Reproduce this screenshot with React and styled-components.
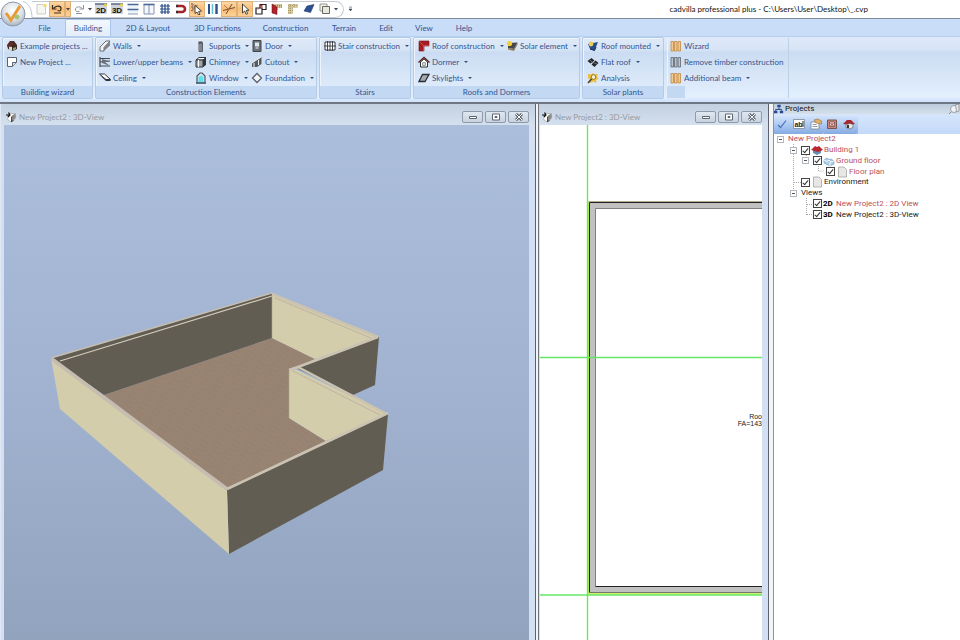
import React from "react";
import styled, { createGlobalStyle, css } from "styled-components";

const Global = createGlobalStyle`
  *, *::before, *::after { box-sizing: border-box; }
  html, body { margin: 0; padding: 0; }
  body { font-family: Lato, "Open Sans", sans-serif; font-size: 8px; line-height: 12px; background: #fff; }
  button { font: inherit; color: inherit; border: 0; padding: 0; margin: 0; background: none; cursor: default; }
`;

const Page = styled.div`
  display: flex;
  flex-direction: column;
  height: 100vh;
  overflow: hidden;
`;

/* ---------- title bar ---------- */

const TitleBar = styled.header`
  position: relative;
  display: flex;
  align-items: center;
  height: 19px;
  padding-left: 32px;
  background: #fff;
  border-bottom: 1px solid #7f8a9c;
`;

const AppOrb = styled.button`
  position: absolute;
  left: 0;
  top: 1px;
  z-index: 2;
  width: 26px;
  height: 26px;
  svg { display: block; }
`;

const SwooshEdge = styled.svg`
  position: absolute;
  left: 22px;
  top: 1px;
`;

const QuickAccess = styled.div`
  display: flex;
  align-items: center;
  height: 17px;
  padding: 0 4px 0 1px;
  border: 1px solid #c3cad6;
  border-left: 0;
  border-radius: 0 9px 9px 0;
`;

const Tool = styled.button`
  display: flex;
  align-items: center;
  justify-content: center;
  width: ${(p) => (p.$narrow ? 6 : 16)}px;
  height: 16px;
  ${(p) =>
    p.$active &&
    css`
      background: linear-gradient(#fbdcae, #fabc74 50%, #fdd59b);
      box-shadow: inset 0 0 0 1px #dcb27a;
    `}
`;

const OverflowButton = styled.button`
  display: flex;
  width: 9px;
  height: 12px;
  margin-left: 2px;
  align-items: center;
  justify-content: center;
`;

const Title = styled.h1`
  margin: 0 92px 0 auto;
  font-size: 8px;
  line-height: 12px;
  font-weight: 400;
  color: #111;
  white-space: nowrap;
`;

/* ---------- ribbon ---------- */

const TabStrip = styled.nav`
  display: flex;
  height: 17px;
  padding-left: 24px;
  background: #c9dcf8;
`;

const Tab = styled.button`
  width: ${(p) => p.$w}px;
  height: 17px;
  color: #35558f;
  white-space: nowrap;
  ${(p) =>
    p.$active &&
    css`
      background: linear-gradient(#f4f8fe, #e3edf9);
      border: 1px solid #a9c5ea;
      border-bottom: 0;
      border-radius: 2px 2px 0 0;
    `}
`;

const Ribbon = styled.section`
  display: flex;
  gap: 2px;
  height: 66px;
  padding: 0 2px 3px;
  background: linear-gradient(#dfe9f8, #d8e5f6 18%, #cbdcf2 24%, #e3effd 92%, #cfe2fa);
  border-top: 1px solid #b4cff0;
`;

const Group = styled.section`
  display: flex;
  flex-direction: column;
  width: ${(p) => p.$w}px;
  border: 1px solid #b3cbe6;
  border-radius: 2px;
  box-shadow: inset 1px 1px 0 #edf4fc;
  ${(p) =>
    p.$open &&
    css`
      border-color: transparent;
      box-shadow: inset 1px 0 0 #edf4fc, inset -1px 0 0 #bcd0e8;
    `}
`;

const Columns = styled.div`
  display: flex;
  flex: 1;
  padding: 0 0 0 ${(p) => p.$pad}px;
`;

const Column = styled.div`
  display: flex;
  flex-direction: column;
  width: ${(p) => (p.$w ? p.$w + "px" : "auto")};
`;

const Command = styled.button`
  display: flex;
  align-items: center;
  gap: 2px;
  height: 16px;
  color: #34548f;
  white-space: nowrap;
  svg { flex: none; }
`;

const Caret = styled.i`
  margin-left: 3px;
  border: 2px solid transparent;
  border-top: 2px solid #35507f;
  border-bottom: 0;
`;

const GroupLabel = styled.h2`
  margin: 0;
  width: ${(p) => (p.$short ? "18px" : "auto")};
  height: 12px;
  font-size: 8px;
  line-height: 12px;
  font-weight: 400;
  text-align: center;
  color: #35558f;
  background: #c3d9f3;
`;

/* ---------- workspace ---------- */

const Workspace = styled.main`
  display: grid;
  grid-template-columns: minmax(0, 536fr) minmax(0, 231fr) 189px;
  grid-template-rows: minmax(0, 1fr);
  flex: 1;
  min-height: 0;
  gap: 2px;
  border-top: 2px solid #707784;
  background: #f3f4f6;
`;

const ViewWindow = styled.section`
  display: flex;
  flex-direction: column;
  min-width: 0;
  padding: 0 6px 0 ${(p) => p.$left}px;
  background: linear-gradient(#c3d0e0, #d5e1ef 22px, #d3e0f3 60px);
  border-right: 1px solid #5d626d;
  border-left: 1px solid ${(p) => p.$edge};
`;

const WindowBar = styled.header`
  display: flex;
  align-items: center;
  height: 21px;
  padding: 4px 0 0 1px;
  gap: 2px;
  color: #969ba3;
`;

const WindowTitle = styled.h2`
  margin: 0;
  flex: 1;
  font-size: 8px;
  line-height: 12px;
  font-weight: 400;
  white-space: nowrap;
`;

const WindowButton = styled.button`
  display: flex;
  align-items: center;
  justify-content: center;
  width: 21px;
  height: 12px;
  border: 1px solid #8f9baa;
  border-radius: 2px;
  background: linear-gradient(#dfe7f0, #c8d3e0);
`;

const Canvas = styled.svg`
  display: block;
  flex: 1;
  width: 100%;
  min-height: 0;
  background: ${(p) => (p.$sheet ? "#fff" : "#a3b4cf")};
`;

const Panel = styled.aside`
  display: flex;
  flex-direction: column;
  margin-left: 2px;
  background: #fff;
  border-left: 1px solid #8d939e;
  font-family: Roboto, "Liberation Sans", Arial, sans-serif;
`;

const PanelHeader = styled.header`
  display: flex;
  align-items: center;
  gap: 1px;
  height: 10px;
  background: linear-gradient(#bccbdc, #d4dfea);
`;

const PanelTitle = styled.h2`
  margin: 0;
  flex: 1;
  font-size: 8px;
  line-height: 10px;
  font-weight: 400;
  color: #111;
`;

const PanelTools = styled.div`
  display: flex;
  height: 20px;
  background: linear-gradient(#d5e5fc, #c4dafa);
`;

const PanelToolSet = styled.div`
  display: flex;
  align-items: center;
  gap: 1px;
  width: ${(p) => p.$w}px;
  background: linear-gradient(#dbe8fc, #b4cff6 45%, #85aae0);
  border-radius: 0 2px 2px 0;
`;

const Tree = styled.ul`
  position: relative;
  display: flex;
  flex-direction: column;
  height: 86px;
  margin: 0;
  padding: 0;
  list-style: none;
`;

const Guides = styled.svg`
  position: absolute;
  left: 0;
  top: 0;
`;

const Node = styled.li`
  position: relative;
  display: flex;
  flex: 1 1 0;
  min-height: 0;
  align-items: center;
  padding-left: ${(p) => [3, 16, 28, 41, 28][p.$level]}px;
  color: ${(p) => (p.$red ? "#b9505c" : "#222")};
  font-size: 8px;
  line-height: 10px;
  white-space: nowrap;
`;

const Expander = styled.button`
  width: 7px;
  height: 7px;
  margin-right: 4px;
  display: flex;
  align-items: center;
  justify-content: center;
  background: #fff;
  border: 1px solid #b4b9c0;
  &::before { content: ""; width: 3px; height: 1px; background: #555; }
`;

const Spacer = styled.span`
  width: 11px;
`;

const CheckLabel = styled.label`
  display: flex;
  align-items: center;
  gap: 1px;
`;

const Check = styled.input`
  appearance: none;
  display: flex;
  justify-content: center;
  width: 9px;
  height: 9px;
  margin: 0;
  background: #fff;
  border: 1px solid #444;
  &:checked::before {
    content: "";
    width: 3px;
    height: 6px;
    border: solid #333;
    border-width: 0 1px 1px 0;
    transform: rotate(40deg);
  }
`;

const Dim = styled.b`
  width: 12px;
  color: #000;
`;

/* ---------- icons ---------- */

const art = {
  page: <><path d="M2 1.500h6l2.500 2.500v7H2z" fill="#f6f6f2" stroke="#b9b9b4" strokeWidth=".7" /><circle cx="10" cy="2.500" r="1.700" fill="#f3dc66" /></>,
  undo: <><path d="M1.500 2v4H5.500" fill="none" stroke="#3b3024" strokeWidth="1.200" /><path d="M2.500 5.500C5 2 10 2.500 10 5.500S8 8 6.500 7.500" fill="none" stroke="#3b3024" strokeWidth="1.300" /><path d="M3 10h7" stroke="#3b3024" /></>,
  redo: <><path d="M10.500 2v4H6.500" fill="none" stroke="#8d9096" /><path d="M9.500 5.500C7 3 3 3.500 2.500 6s2 3 4 2.500M3 10.500h6" fill="none" stroke="#8d9096" /></>,
  h2: <><path d="M0 1h12v10H0z" fill="#cfd3da" /><path d="M0 1h12" stroke="#5d6b86" strokeWidth="1.500" /><text x="6" y="9.500" fontSize="8" fontWeight="700" textAnchor="middle" fontFamily="Liberation Sans, sans-serif" fill="#111">2D</text><circle cx="10.500" cy="2" r="1.500" fill="#f0cf45" /></>,
  h3: <><path d="M0 1h12v10H0z" fill="#cfd3da" /><path d="M0 1h12" stroke="#5d6b86" strokeWidth="1.500" /><text x="6" y="9.500" fontSize="8" fontWeight="700" textAnchor="middle" fontFamily="Liberation Sans, sans-serif" fill="#111">3D</text><circle cx="10.500" cy="2" r="1.500" fill="#f0cf45" /></>,
  splitH: <><path d="M1 1h10v10H1z" fill="#eef3fa" /><path d="M.5 1.500h11M.5 6.500h11" stroke="#4a6797" strokeWidth="1.500" /><path d="M1 11h10" stroke="#8f9db5" /></>,
  splitV: <><path d="M1 1.500h10v9.500H1zM6 2v9" fill="#f4f7fb" stroke="#8494ae" /><path d="M.5 1.500h11" stroke="#4a6797" strokeWidth="1.600" /></>,
  grid: <path d="M3 1v10M6 1v10M9 1v10M1 3h10M1 6h10M1 9h10" stroke="#264c86" strokeWidth="1.200" />,
  magnet: <><path d="M2 3h5a3 3 0 0 1 0 6H2" fill="none" stroke="#a5222a" strokeWidth="2.600" /><path d="M1 3h2M1 9h2" stroke="#333" strokeWidth="2.600" /></>,
  pick: <><path d="M0 1l7 2M1 0l1 9M0 8l7-6M0 4h5" stroke="#6a5446" strokeWidth=".8" strokeDasharray="1.500 .7" /><path d="M4 2.500v8l2-1.500 1.500 3 1.500-.7-1.400-2.800 2.900-.5z" fill="#fff" stroke="#333" strokeWidth=".9" /></>,
  bars: <><path d="M2 1v10" stroke="#2d4f85" strokeWidth="2" /><path d="M5.500 1v10" stroke="#5fc3dc" strokeWidth="1.600" /><path d="M9.500 1v10" stroke="#2d4f85" strokeWidth="2.400" /></>,
  snap: <><path d="M0 7.500l12-3M3 11L9 1" stroke="#735035" /><path d="M1 2l5 5" stroke="#ab6739" strokeWidth=".8" /></>,
  arrow: <path d="M3.500 1v9l2.200-2 1.500 3.300 1.500-.7-1.500-3.200H10z" fill="#fff" stroke="#333" strokeWidth=".9" />,
  copy: <><path d="M5 1.500h6v5H5z" fill="#fff" stroke="#222" strokeWidth="1.200" /><path d="M1 5h6v6H1z" fill="#fff" stroke="#222" strokeWidth="1.200" /><path d="M3 6.500l4-4M5 2.500h2v2" stroke="#b23332" fill="none" /></>,
  redWall: <><path d="M1 1h10v4H7v2H4z" fill="#d3c59a" /><path d="M1 1l5 3v7.500L1 10z" fill="#b32028" stroke="#5f1519" strokeWidth=".5" /><path d="M4 2.500h7M6 4h5" stroke="#7e6e46" strokeWidth=".8" strokeDasharray="1 1" /></>,
  tanWall: <><path d="M1 1h10v4H6v6H1z" fill="#d9cda0" /><path d="M1 2.500h10M1 5h6M1 7.500h5M1 10h4M3 1v10M7 1v4" stroke="#8f8050" strokeWidth=".7" strokeDasharray="1 1" /></>,
  slab: <path d="M4 3L11 1.500 7.500 9.500 1 8z" fill="#2c4f92" stroke="#23396a" strokeWidth=".6" />,
  sheets: <><path d="M1 1h7v7H1z" fill="#f3f2ea" stroke="#96958c" /><path d="M3.500 3.500h7v7h-7z" fill="#e9e8da" stroke="#696b66" /></>,
  overflow: <path d="M4 3.500h4M4 6h4l-2 2.500z" fill="#345" stroke="#345" strokeWidth=".8" />,
  house: <><path d="M1 5l3-4h4l3 4v4l-4 2-5-2z" fill="#3c2d29" /><path d="M3 6l3 1v3.500L3 9.500z" fill="#e5dcce" /><path d="M1 6l4-4.500 3 1L5 7z" fill="#6d2b26" /><path d="M7 8l3-1v2l-3 2z" fill="#8aa37b" /></>,
  newProj: <><path d="M1.500 1.500h9v5h-4v4h-5z" fill="#fff" stroke="#5c636e" /><path d="M10.500 6.500l-4 4" stroke="#8a8f96" /></>,
  wall: <><path d="M1 7l6-6h4L5 7.500V11H1z" fill="#f3f3f1" stroke="#5b6068" strokeWidth=".9" /><path d="M5 7.500L11 1.500v4L5 11z" fill="#7d828a" /></>,
  beams: <><path d="M1 1v10M1 2.500h10M1 6l10-1M1 10h10" stroke="#444a55" strokeWidth="1.200" /><path d="M3 3l7 2-4 1 5 4-8-3z" fill="#6b717b" /></>,
  ceiling: <><path d="M.5 2h5l6 5.500H7z" fill="#fff" stroke="#30343b" /><path d="M.5 3L7 9h4.500V7.500H7z" fill="#30343b" /></>,
  support: <><path d="M4 3h3.500v8.500H4z" fill="#b6babf" stroke="#3d4148" strokeWidth=".8" /><path d="M3.500 1.500h4v2h-4z" fill="#4b4f56" /><path d="M6 4v7" stroke="#50555c" /></>,
  chimney: <><path d="M1 4l3-2.500h7L8 4z" fill="#fff" stroke="#30343b" /><path d="M1 4h7v7H1z" fill="#a0a4a9" stroke="#30343b" /><path d="M8 4l3-2.500V9L8 11z" fill="#30343b" /><path d="M3.500 4v7" stroke="#fff" /></>,
  window: <><path d="M2 11V4l3-3h2l3 3v7z" fill="#dfe8ee" stroke="#4a5561" strokeWidth="1.200" /><path d="M3.500 10V5L6 3.500 8.500 5v5z" fill="#5fe0ee" /><path d="M1 11h10" stroke="#34536a" strokeWidth="1.200" /></>,
  door: <><path d="M2 .5h8v11H2z" fill="#6a7078" stroke="#40454c" /><path d="M4 2.500h4v4H4z" fill="#dfe7ee" /><path d="M4.500 8h3" stroke="#eee" /></>,
  cutout: <><path d="M1 7l5-3.500v7.500H1zM6 4l4.500-3v7L6 11z" fill="#555b63" /><path d="M1 7l9-6M3 7v4M7.500 4v5" stroke="#eee" strokeWidth="1" /></>,
  foundation: <path d="M6 1.500L10.500 6 6 10.500 1.500 6z" fill="#f3f5f7" stroke="#5b626d" strokeWidth="1.300" />,
  stairs: <><path d="M1 2h10v8H1z" fill="#fff" stroke="#333840" /><path d="M3.500 1v10M6 1v10M8.500 1v10M0 6h12" stroke="#333840" strokeWidth=".9" /></>,
  roof: <><path d="M1 1h10v5H6v5H1z" fill="#a71d22" stroke="#781114" strokeWidth=".6" /><path d="M1 1l4.500 4.500M5.500 11V5.500H11" stroke="#df6a65" strokeWidth=".6" fill="none" /></>,
  dormer: <><path d="M2.500 6v5h7V6L6 3z" fill="#fff" stroke="#333" /><path d="M.5 6.500L6 1.500l5.500 5" fill="none" stroke="#5b2423" strokeWidth="1.500" /><path d="M4.500 6.500h3v3h-3z" fill="#ced4da" stroke="#777" strokeWidth=".6" /></>,
  skylight: <path d="M4.500 2.500h6.500L7 9.500H1z" fill="#a5aab0" stroke="#2b2f36" strokeWidth="1.300" />,
  solar: <><path d="M2 3l9.500-.5L8 9 2 8z" fill="#45464a" /><path d="M2 8l6 1 3.500-6.500v2L8 11 2 9.500z" fill="#8f7d5c" /><circle cx="3.500" cy="3.500" r="2.600" fill="#f4cf3d" /></>,
  mounted: <><path d="M1 4l10-2-3.500 8.500L3 9z" fill="#264d8d" /><path d="M3 9l4.500 1.500L9 7" stroke="#152a55" fill="none" /><circle cx="4" cy="4" r="2.400" fill="#e9cf5c" /></>,
  flat: <><path d="M.5 5l4-3 3 2.500-4 3zM4.500 8.500l4-4 3 2.500-4 4z" fill="#25282d" /><path d="M3 4l3 3M7 7l3 1" stroke="#888" strokeWidth=".7" /></>,
  analysis: <><path d="M1 2l3 .5L6 1l1.500 1.500L11 2l-1 3 1.500 2L9 8l.5 3-3-1.500L3 11l.5-3L1 6z" fill="#edbe3a" /><circle cx="6.500" cy="5" r="2.300" fill="#f5f1d0" stroke="#755f2b" strokeWidth=".8" /><path d="M4.500 7L1 11" stroke="#433d37" strokeWidth="1.500" /></>,
  timber: <><path d="M1 1.500h2.500v9.500H1zM4.500 1.500H7v9.500H4.500zM8 1.500h2.500v9.500H8z" fill="#f2c98e" stroke="#c08a47" strokeWidth=".8" /></>,
  timberGrey: <path d="M1 1.500h2.500v9.500H1zM4.500 1.500H7v9.500H4.500zM8 1.500h2.500v9.500H8z" fill="#bdc3cc" stroke="#5c6470" strokeWidth=".8" />,
  view: <><path d="M2.500 4L5 2.500h5.500v5L6 11 3 9z" fill="#fff" stroke="#999" strokeWidth=".6" /><path d="M7 4.500l3.500-2V7L6.500 11z" fill="#888" /><path d="M6.500 5.500V11l2-2" stroke="#222" strokeWidth=".8" fill="none" /><path d="M1 4h4M3.500 1.500L5 4 3 6" stroke="#111" fill="none" strokeWidth="1.200" /></>,
  network: <><path d="M4 1h4v3H4zM0 8h4v3H0zM7 8h4v3H7z" fill="#244a96" /><path d="M6 4v2.500M2 8V6.500h7V8" stroke="#244a96" fill="none" strokeWidth="1.200" /></>,
  pin: <><path d="M1 11l3-3" stroke="#888e96" /><circle cx="6" cy="6" r="3.500" fill="#f2f3f5" stroke="#9aa0a8" /><path d="M7.500 1.500H11V8L8.500 9z" fill="#e6e9ec" stroke="#9aa0a8" /></>,
  tick: <path d="M2 7l2.500 2.500 5.500-7" fill="none" stroke="#4a72b4" strokeWidth="1.200" />,
  abl: <><path d="M.5 1.500h11v9H.5z" fill="#fff" stroke="#7b8593" strokeWidth=".8" /><text x="5.500" y="8.500" fontSize="7" fontWeight="700" textAnchor="middle" fontFamily="Liberation Sans, sans-serif" fill="#222">ab</text><path d="M10 3v6" stroke="#222" /></>,
  props: <><path d="M1 4h8v7H1z" fill="#fff" stroke="#768395" strokeWidth=".8" /><path d="M4 2l4-1 3.500 2v3l-5.500-1z" fill="#e0b068" stroke="#9a713b" strokeWidth=".6" /><path d="M2.500 6.500h4M2.500 8.500h5" stroke="#768395" strokeWidth=".8" /></>,
  redBox: <><path d="M1.500 2h9v8.500h-9z" fill="#c9857e" stroke="#79544f" /><path d="M3.500 4h5v4.500h-5z" fill="#f1e6e3" stroke="#79544f" strokeWidth=".8" /><path d="M4.500 5l3 3m0-3l-3 3" stroke="#a83831" /></>,
  redHouse: <><path d="M0 6l4-4h4l4 4-5 1z" fill="#a9272d" /><path d="M3 6.500l4-1 3 1v3l-3.500 1.500L3 9.500z" fill="#e8e8ea" stroke="#555" strokeWidth=".6" /><path d="M4 7h2v3H4z" fill="#333" /></>,
  building: <><path d="M2 6h8v3l-4 2-4-2z" fill="#648fb2" /><path d="M0 6l4-4 2 1 2-1 4 4-5 2z" fill="#b92830" /></>,
  floor: <><path d="M1 5l3-2 2 1.500L8 4l3 2v3l-4 2-6-3z" fill="#a7cdea" stroke="#6d9abc" strokeWidth=".6" /><path d="M1 5l3 1.500L6 5l2 2 3-1M7 7v4" stroke="#fff" fill="none" /></>,
  doc: <path d="M2.500 1H8l2.500 2.500V11h-8z" fill="#e7e7e5" stroke="#a4a4a2" strokeWidth=".8" />,
};

function Icon({ name, size = 12 }) {
  return (
    <svg width={size} height={size} viewBox="0 0 12 12" aria-hidden="true">
      {art[name]}
    </svg>
  );
}

/* ---------- data ---------- */

const tools = [
  ["page"],
  ["undo", true],
  ["caret", true],
  ["redo"],
  ["caret"],
  ["h2"], ["h3"], ["splitH"], ["splitV"], ["grid"], ["magnet"],
  ["pick", true],
  ["bars"],
  ["snap", true],
  ["arrow", true],
  ["copy"], ["redWall"], ["tanWall"], ["slab"], ["sheets"],
  ["caret"],
];

const tabs = [
  ["File", 41], ["Building", 46], ["2D & Layout", 74], ["3D Functions", 65], ["Construction", 71],
  ["Terrain", 46], ["Edit", 38], ["View", 38], ["Help", 42],
];

const groups = [
  { label: "Building wizard", w: 91, pad: 3, cols: [{ items: [["house", "Example projects ..."], ["newProj", "New Project ..."]] }] },
  {
    label: "Construction Elements", w: 222, pad: 3,
    cols: [
      { w: 96, items: [["wall", "Walls", 1], ["beams", "Lower/upper beams", 1], ["ceiling", "Ceiling", 1]] },
      { w: 56, items: [["support", "Supports", 1], ["chimney", "Chimney", 1], ["window", "Window", 1]] },
      { items: [["door", "Door", 1], ["cutout", "Cutout", 1], ["foundation", "Foundation", 1]] },
    ],
  },
  { label: "Stairs", w: 92, pad: 4, cols: [{ items: [["stairs", "Stair construction", 1]] }] },
  {
    label: "Roofs and Dormers", w: 167, pad: 4,
    cols: [
      { w: 88, items: [["roof", "Roof construction", 1], ["dormer", "Dormer", 1], ["skylight", "Skylights", 1]] },
      { items: [["solar", "Solar element", 1]] },
    ],
  },
  { label: "Solar plants", w: 82, pad: 4, cols: [{ items: [["mounted", "Roof mounted", 1], ["flat", "Flat roof", 1], ["analysis", "Analysis"]] }] },
  { label: "", w: 124, pad: 3, open: true, cols: [{ items: [["timber", "Wizard"], ["timberGrey", "Remove timber construction"], ["timber", "Additional beam", 1]] }] },
];

const nodes = [
  { level: 0, text: "New Project2", red: true, expand: true },
  { level: 1, text: "Building 1", red: true, expand: true, check: true, icon: "building" },
  { level: 2, text: "Ground floor", red: true, expand: true, check: true, icon: "floor" },
  { level: 3, text: "Floor plan", red: true, check: true, icon: "doc" },
  { level: 1, text: "Environment", check: true, icon: "doc" },
  { level: 1, text: "Views", expand: true },
  { level: 4, text: "New Project2 : 2D View", red: true, check: true, dim: "2D" },
  { level: 4, text: "New Project2 : 3D-View", check: true, dim: "3D" },
];

/* ---------- views ---------- */

function Scene3D() {
  return (
    <Canvas viewBox="4 125 525 515" preserveAspectRatio="xMinYMin slice" role="img" aria-label="3D view of the ground floor">
      <defs>
        <linearGradient id="sky" x1="0" y1="0" x2="0" y2="1">
          <stop offset="0" stopColor="#abbedb" />
          <stop offset=".5" stopColor="#a1b3d0" />
          <stop offset="1" stopColor="#92a3be" />
        </linearGradient>
        <pattern id="planks" width="14" height="5" patternUnits="userSpaceOnUse" patternTransform="rotate(28)">
          <path d="M0 0h14v5H0z" fill="#998473" />
          <path d="M0 1h9M5 3.500h9" stroke="#927d6c" strokeWidth=".6" />
        </pattern>
      </defs>
      <path d="M4 125h525v515H4z" fill="url(#sky)" />
      <path d="M104 395L272 338 315 359 289 371 289 418 326 441 228 490z" fill="url(#planks)" />
      <path d="M51 358L272 293V338L104 395z" fill="#615d53" />
      <path d="M272 294L379 337 315 359 272 338z" fill="#d3cdac" />
      <path d="M296 368L379 337 375 385 353 395z" fill="#615d53" />
      <path d="M289 370H297L388 414 326 441 289 418z" fill="#d3cdac" />
      <path d="M227 490L388 414 383 470 229 554z" fill="#615d53" />
      <path d="M51 358L227 490 229 554 60 409z" fill="#d3cdac" />
      <path d="M51 358L272 293" stroke="#c6beb1" strokeWidth="1.500" />
      <path d="M60 361L272 296" stroke="#d3cbb9" strokeWidth="1.200" />
      <path d="M272 294L378 337M289 370L298 367 387 414" fill="none" stroke="#cbc2b0" strokeWidth="2.500" />
      <path d="M275 298L371 338M293 371L380 415" stroke="#bdb3a4" strokeWidth="1" />
      <path d="M52 359L227 489" stroke="#c6bdb0" strokeWidth="3.500" />
      <path d="M227 489L388 413M290 370L378 337" stroke="#cbc3b1" strokeWidth="2.500" />
      <path d="M272 296V338M289 371V418" stroke="#aaa48a" strokeWidth=".6" />
    </Canvas>
  );
}

function Plan2D() {
  return (
    <Canvas $sheet viewBox="540 125 222 515" preserveAspectRatio="xMinYMin slice" role="img" aria-label="2D floor plan">
      <path d="M589 203h186v6H596v378h179v6H589z" fill="#c1c1c1" />
      <path d="M775 201.500H588.500" stroke="#b4b08b" fill="none" />
      <path d="M588.500 202V594H775" stroke="#b9ee45" strokeWidth="1.500" fill="none" />
      <path d="M775 202.500H589.500V592.500" stroke="#222" fill="none" />
      <path d="M589.500 592.500H775" stroke="#76766a" fill="none" />
      <path d="M775 208.500H595.500V586.500" stroke="#808080" fill="none" />
      <path d="M595.500 586.500H775" stroke="#222" fill="none" />
      <path d="M587.500 125V640M540 357.500H775M540 595H775" stroke="#66e866" strokeWidth="1.400" fill="none" />
      <g fontFamily="Liberation Sans, Arial, sans-serif" fontSize="7" fill="#222" textAnchor="end">
        <text x="762" y="419">Roo</text>
        <text x="762" y="426">FA=143</text>
      </g>
    </Canvas>
  );
}

function View({ left, edge, children }) {
  return (
    <ViewWindow $left={left} $edge={edge}>
      <WindowBar>
        <Icon name="view" />
        <WindowTitle>New Project2 : 3D-View</WindowTitle>
        <WindowButton aria-label="Minimize">
          <svg width="8" height="6"><path d="M.5 2.500h7v2h-7z" fill="#fff" stroke="#5d6570" /></svg>
        </WindowButton>
        <WindowButton aria-label="Maximize">
          <svg width="8" height="8"><path d="M.5 1h7v6h-7zM3 3.500h2v1H3z" fill="#fff" stroke="#5d6570" /></svg>
        </WindowButton>
        <WindowButton aria-label="Close">
          <svg width="8" height="8"><path d="M1 1l6 6M7 1L1 7" stroke="#5d6570" strokeWidth="3" /><path d="M1 1l6 6M7 1L1 7" stroke="#fff" strokeWidth="1" /></svg>
        </WindowButton>
      </WindowBar>
      {children}
    </ViewWindow>
  );
}

function TreeNode({ node }) {
  const id = "node-" + node.text.replace(/\W+/g, "-");
  return (
    <Node $level={node.level} $red={node.red}>
      {node.expand ? <Expander aria-label={"Collapse " + node.text} /> : <Spacer />}
      {node.check ? (
        <CheckLabel htmlFor={id}>
          <Check id={id} type="checkbox" defaultChecked />
          {node.dim ? <Dim>{node.dim}</Dim> : <Icon name={node.icon} />}
          {node.text}
        </CheckLabel>
      ) : (
        node.text
      )}
    </Node>
  );
}

export default function App() {
  return (
    <Page>
      <Global />
      <TitleBar>
        <AppOrb aria-label="Application menu">
          <svg width="26" height="26" viewBox="0 0 26 26">
            <defs>
              <radialGradient id="orb" cx=".5" cy=".35" r=".65">
                <stop offset="0" stopColor="#fff" />
                <stop offset=".6" stopColor="#dde1e7" />
                <stop offset="1" stopColor="#a7b0bd" />
              </radialGradient>
            </defs>
            <circle cx="13" cy="13" r="12" fill="url(#orb)" stroke="#8d98a8" />
            <path d="M6 12l5 7L20 5" fill="none" stroke="#e79b35" strokeWidth="3" />
            <circle cx="17" cy="16" r="2.500" fill="#a5c478" />
          </svg>
        </AppOrb>
        <SwooshEdge width="12" height="17" viewBox="0 0 12 17">
          <path d="M1 .5c5 1 9 7 9 16" fill="none" stroke="#bfc5cf" />
        </SwooshEdge>
        <QuickAccess>
          {tools.map(([name, active], i) => (
            <Tool key={i} $active={active} $narrow={name === "caret"} aria-label={name}>
              {name === "caret" ? <svg width="4" height="3"><path d="M0 0h4L2 2.500z" fill="#3d4654" /></svg> : <Icon name={name} />}
            </Tool>
          ))}
        </QuickAccess>
        <OverflowButton aria-label="Customize toolbar"><Icon name="overflow" /></OverflowButton>
        <Title>cadvilla professional plus - C:\Users\User\Desktop\_.cvp</Title>
      </TitleBar>

      <TabStrip>
        {tabs.map(([name, w]) => (
          <Tab key={name} $w={w} $active={name === "Building"}>{name}</Tab>
        ))}
      </TabStrip>

      <Ribbon>
        {groups.map((g, i) => (
          <Group key={i} $w={g.w} $open={g.open}>
            <Columns $pad={g.pad}>
              {g.cols.map((c, j) => (
                <Column key={j} $w={c.w}>
                  {c.items.map(([icon, text, menu]) => (
                    <Command key={text}>
                      <Icon name={icon} />
                      {text}
                      {menu && <Caret />}
                    </Command>
                  ))}
                </Column>
              ))}
            </Columns>
            <GroupLabel $short={g.open}>{g.label}</GroupLabel>
          </Group>
        ))}
      </Ribbon>

      <Workspace>
        <View left={3} edge="#dfe8f4"><Scene3D /></View>
        <View left={1} edge="#70757f"><Plan2D /></View>
        <Panel>
          <PanelHeader>
            <Icon name="network" size={10} />
            <PanelTitle>Projects</PanelTitle>
            <Icon name="pin" />
          </PanelHeader>
          <PanelTools>
            <PanelToolSet $w={50}>
              {["tick", "abl", "props"].map((n) => <Tool key={n} aria-label={n}><Icon name={n} /></Tool>)}
            </PanelToolSet>
            <PanelToolSet $w={34}>
              {["redBox", "redHouse"].map((n) => <Tool key={n} aria-label={n}><Icon name={n} /></Tool>)}
            </PanelToolSet>
          </PanelTools>
          <Tree>
            <Guides width="50" height="86">
              <path d="M19.500 10v49M20 48.500h8M32.500 21v5M44.500 32v5h6M32.500 64v17M33 70.500h8M33 80.500h8" fill="none" stroke="#aaa" strokeDasharray="1 1" />
            </Guides>
            {nodes.map((n) => <TreeNode key={n.text} node={n} />)}
          </Tree>
        </Panel>
      </Workspace>
    </Page>
  );
}
